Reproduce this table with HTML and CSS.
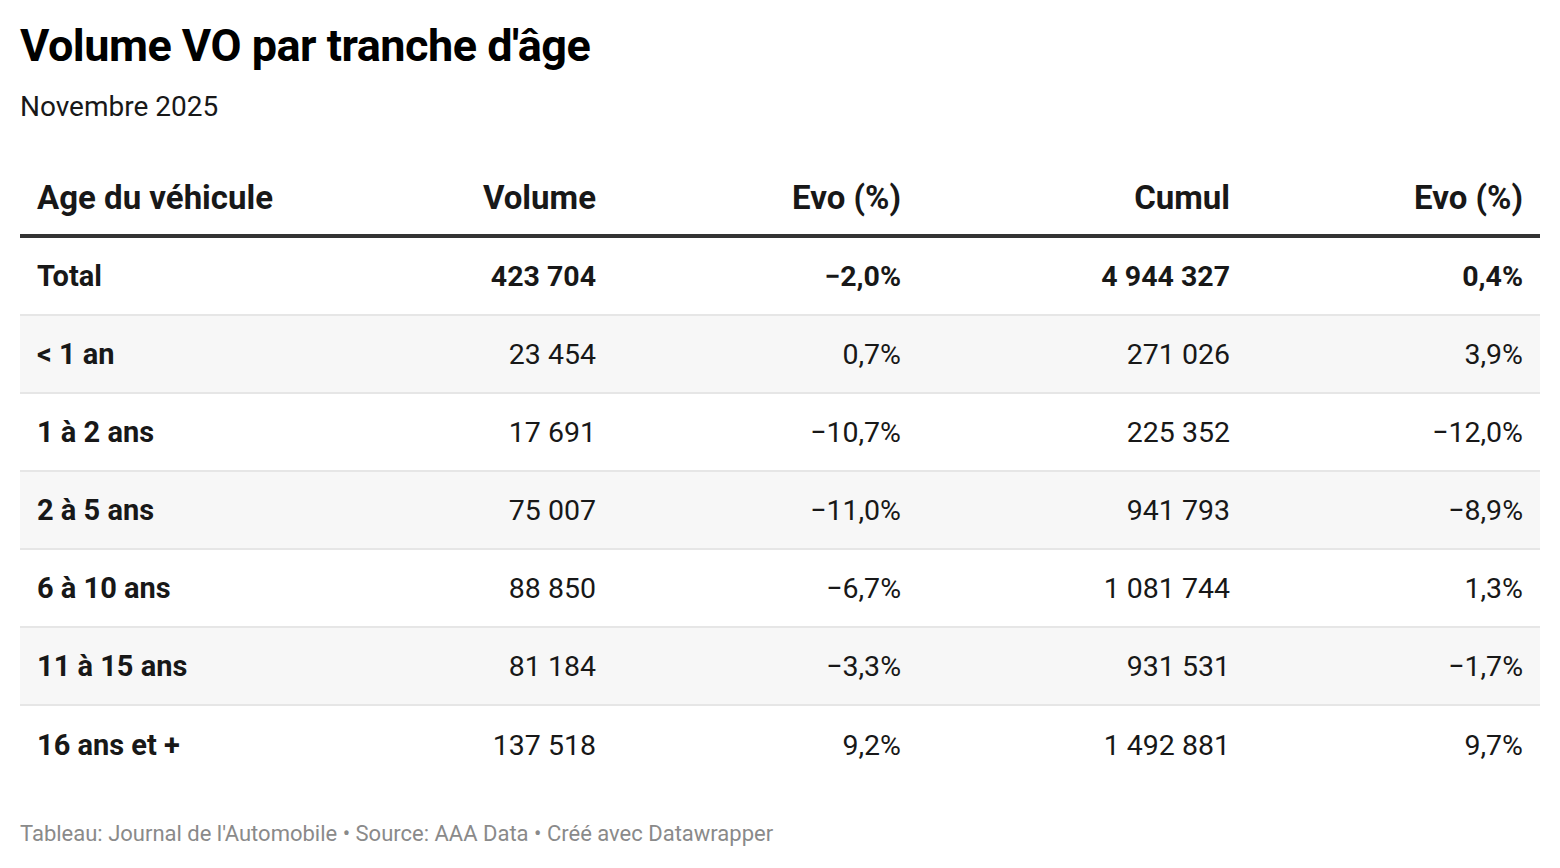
FILE: index.html
```html
<!DOCTYPE html>
<html lang="fr">
<head>
<meta charset="utf-8">
<title>Volume VO par tranche d'âge</title>
<link rel="stylesheet" href="styles.css">
</head>
<body>
<div class="chart">
  <h1 class="title">Volume VO par tranche d'âge</h1>
  <p class="subtitle">Novembre 2025</p>
  <div class="table">
    <div class="row head">
      <div class="cell left">Age du véhicule</div>
      <div class="cell">Volume</div>
      <div class="cell">Evo (%)</div>
      <div class="cell">Cumul</div>
      <div class="cell">Evo (%)</div>
    </div>
    <div class="row total">
      <div class="cell left">Total</div>
      <div class="cell">423 704</div>
      <div class="cell">−2,0%</div>
      <div class="cell">4 944 327</div>
      <div class="cell">0,4%</div>
    </div>
    <div class="row alt">
      <div class="cell left">&lt; 1 an</div>
      <div class="cell">23 454</div>
      <div class="cell">0,7%</div>
      <div class="cell">271 026</div>
      <div class="cell">3,9%</div>
    </div>
    <div class="row">
      <div class="cell left">1 à 2 ans</div>
      <div class="cell">17 691</div>
      <div class="cell">−10,7%</div>
      <div class="cell">225 352</div>
      <div class="cell">−12,0%</div>
    </div>
    <div class="row alt">
      <div class="cell left">2 à 5 ans</div>
      <div class="cell">75 007</div>
      <div class="cell">−11,0%</div>
      <div class="cell">941 793</div>
      <div class="cell">−8,9%</div>
    </div>
    <div class="row">
      <div class="cell left">6 à 10 ans</div>
      <div class="cell">88 850</div>
      <div class="cell">−6,7%</div>
      <div class="cell">1 081 744</div>
      <div class="cell">1,3%</div>
    </div>
    <div class="row alt">
      <div class="cell left">11 à 15 ans</div>
      <div class="cell">81 184</div>
      <div class="cell">−3,3%</div>
      <div class="cell">931 531</div>
      <div class="cell">−1,7%</div>
    </div>
    <div class="row last">
      <div class="cell left">16 ans et +</div>
      <div class="cell">137 518</div>
      <div class="cell">9,2%</div>
      <div class="cell">1 492 881</div>
      <div class="cell">9,7%</div>
    </div>
  </div>
  <p class="footer">Tableau: Journal de l'Automobile • Source: AAA Data • Créé avec Datawrapper</p>
</div>
</body>
</html>
```
FILE: styles.css
```css
html, body {
  margin: 0;
  padding: 0;
  background: #ffffff;
}
body {
  font-family: Roboto, "Liberation Sans", Arial, sans-serif;
  color: #181818;
}
.chart {
  padding: 0 20px;
}
.title {
  margin: 0;
  padding-top: 20px;
  font-size: 45px;
  line-height: 52px;
  font-weight: 700;
  letter-spacing: -0.5px;
  color: #000;
}
.subtitle {
  margin: 0;
  padding-top: 18px;
  font-size: 28px;
  line-height: 34px;
  font-weight: 400;
  color: #181818;
}
.table {
  margin-top: 42px;
}
.row {
  display: grid;
  grid-template-columns: 300px 293px 305px 329px 293px;
  height: 78px;
  align-items: center;
  border-bottom: 2px solid #e6e6e6;
  box-sizing: border-box;
  font-size: 28.5px;
}
.row.head {
  height: 72px;
  align-items: center;
  border-bottom: 4px solid #333333;
  font-size: 33px;
  font-weight: 700;
  padding-bottom: 6px;
}
.row.alt {
  background: #f7f7f7;
}
.row.last {
  border-bottom: none;
}
.row.total {
  font-weight: 700;
}
.cell {
  padding: 0 17px;
  text-align: right;
  white-space: nowrap;
}
.cell.left {
  text-align: left;
  font-weight: 700;
  font-size: 29px;
}
.row.head .cell.left {
  font-size: 33px;
}
.footer {
  margin: 0;
  padding-top: 36px;
  font-size: 22px;
  line-height: 28px;
  color: #8a8a8a;
}
```
